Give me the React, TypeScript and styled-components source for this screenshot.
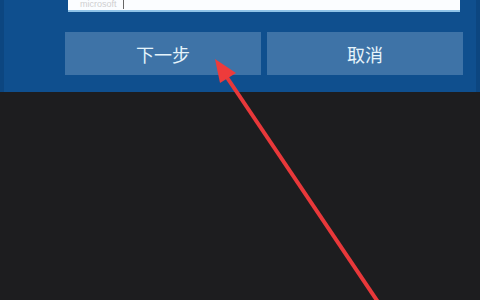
import React from "react";
import styled, { createGlobalStyle } from "styled-components";

const GlobalStyle = createGlobalStyle`
  html, body {
    margin: 0;
    padding: 0;
    background: #1e1e1e;
    font-family: "Noto Sans CJK SC", "Noto Sans", sans-serif;
    overflow: hidden;
  }
`;

const Screen = styled.div`
  position: relative;
  width: 480px;
  height: 300px;
  overflow: hidden;
  background: #1d1d1f;
`;

const Dialog = styled.div`
  background: #0f4f8e;
  height: 92px;
  padding: 0 12px 0 61px;
  box-sizing: border-box;
  display: flex;
  flex-direction: column;
  border-left: 4px solid #0c4680;
  border-right: 4px solid #0c4680;
`;

const Input = styled.div`
  margin-top: -20px;
  margin-left: 3px;
  width: 392px;
  height: 32px;
  box-sizing: border-box;
  background: #fbfdff;
  border-bottom: 2px solid #8fc3e8;
  display: flex;
  align-items: flex-end;
  padding: 0 12px 1px;
  font-family: "Liberation Sans", sans-serif;
  font-size: 9px;
  line-height: 9px;
  color: #cfcfcf;
`;

const Caret = styled.span`
  display: inline-block;
  width: 1px;
  height: 9px;
  background: #666;
  margin-left: 6px;
`;

const Buttons = styled.div`
  margin-top: 20px;
  display: flex;
  gap: 6px;
`;

const Button = styled.button`
  width: 196px;
  height: 43px;
  border: none;
  background: #3e73a7;
  color: #e6f4fb;
  font-family: "Noto Sans CJK SC", sans-serif;
  font-size: 18px;
  padding: 0;
  cursor: pointer;
`;

const Arrow = styled.svg`
  position: absolute;
  left: 0;
  top: 0;
  pointer-events: none;
`;

export default function App() {
  return (
    <Screen>
      <GlobalStyle />
      <Dialog>
        <Input>
          <span>microsoft</span>
          <Caret />
        </Input>
        <Buttons>
          <Button>下一步</Button>
          <Button>取消</Button>
        </Buttons>
      </Dialog>
      <Arrow width="480" height="300" viewBox="0 0 480 300">
        <line x1="378" y1="302" x2="226" y2="76" stroke="#e8383a" strokeWidth="4" />
        <polygon points="215,59 236,73 220,83" fill="#ee3b3b" />
      </Arrow>
    </Screen>
  );
}
